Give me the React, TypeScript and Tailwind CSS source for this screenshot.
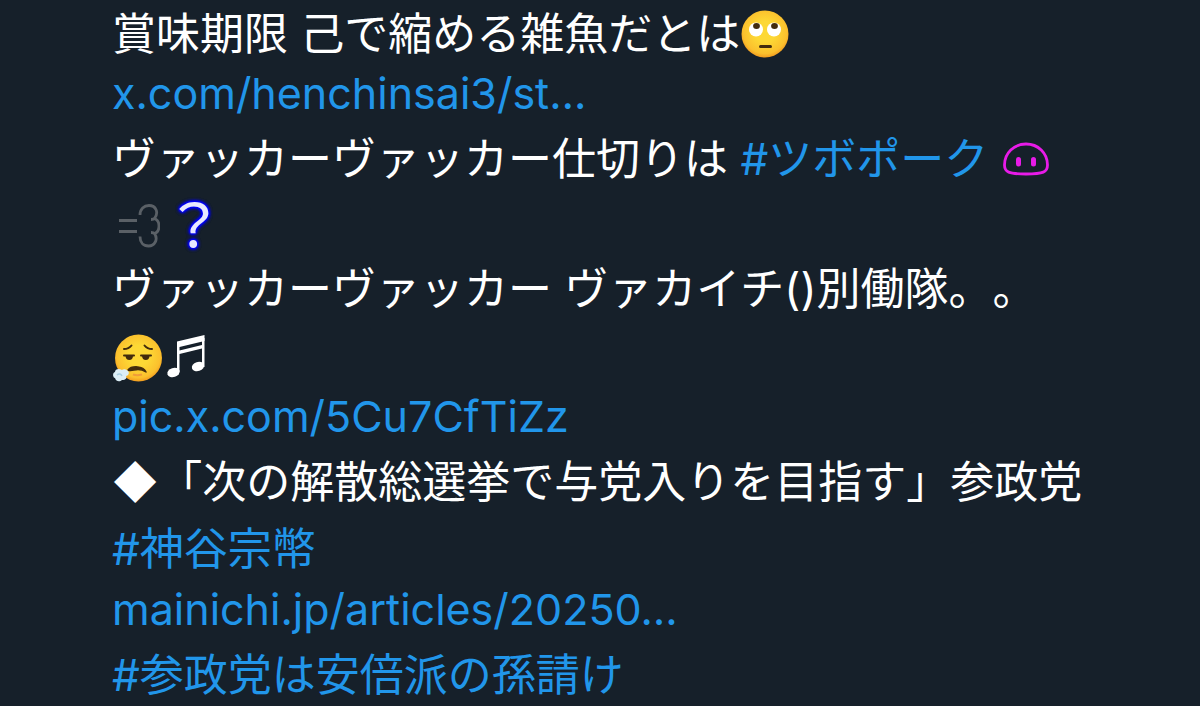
import type { ReactNode } from 'react'

const jp = 'block h-[65px] leading-[65px]'
const latin = 'block h-[60px] text-[43px] leading-[52px]'
const tall = 'block h-[68px] leading-[68px]'

function Link({ children }: { children: ReactNode }) {
  return (
    <a href="#" className="text-[#2196ea]">
      {children}
    </a>
  )
}

function FaceGradient({ id }: { id: string }) {
  return (
    <defs>
      <radialGradient id={id} cx="0.5" cy="0.45" r="0.55">
        <stop offset="0.4" stopColor="#fdd835" />
        <stop offset="0.85" stopColor="#fbc02d" />
        <stop offset="1" stopColor="#f29c1f" />
      </radialGradient>
    </defs>
  )
}

function RollingEyes() {
  return (
    <svg role="img" aria-label="🙄" viewBox="0 0 50 50" className="mb-2 inline-block size-[50px] align-middle">
      <FaceGradient id="roll" />
      <circle cx="25" cy="25" r="23.5" fill="url(#roll)" />
      <circle cx="16" cy="20.5" r="7" fill="#fff" />
      <circle cx="34" cy="20.5" r="7" fill="#fff" />
      <ellipse cx="16.5" cy="17" rx="3.4" ry="2.9" fill="#422b0d" />
      <ellipse cx="34.5" cy="17" rx="3.4" ry="2.9" fill="#422b0d" />
      <path d="M20.5 37.5h10" stroke="#422b0d" strokeWidth="3" strokeLinecap="round" />
    </svg>
  )
}

function Exhaling() {
  return (
    <svg role="img" aria-label="😮‍💨" viewBox="0 0 50 50" className="mb-1 inline-block size-[50px] align-middle">
      <FaceGradient id="exhale" />
      <circle cx="26.5" cy="25" r="23.5" fill="url(#exhale)" />
      <g fill="none" stroke="#422b0d" strokeWidth="2" strokeLinecap="round">
        <path d="M12 16c3 0 5.500-1 7.500-3.500" />
        <path d="M40 16c-3 0-5.500-1-7.500-3.500" />
        <path d="M12 22.500h10" />
        <path d="M29 22.500h10" />
      </g>
      <path d="M13.500 22.500h7.500c0 3-1.500 4.500-3.700 4.500s-3.800-1.500-3.800-4.500z" fill="#422b0d" />
      <path d="M30 22.500h7.500c0 3-1.500 4.500-3.700 4.500s-3.800-1.500-3.800-4.500z" fill="#422b0d" />
      <path
        d="M16 37c3-4 15-5 18 2-3-2-5-2.500-8-2.500-4 0-7 2-10 .5z"
        fill="#422b0d"
        stroke="#422b0d"
        strokeWidth="1.5"
        strokeLinejoin="round"
      />
      <path d="M21 41.500q4 1.500 9 0" stroke="#f09c3a" strokeWidth="2" fill="none" />
      <path
        d="M16 38c-2-2-5-2-6-1-3-2-7-1-7 2-3 1-2 6 0 6 1 4 5 4 7 2 4 0 5-2 4-4 2 0 4-3 2-5z"
        fill="#dceef6"
      />
      <path d="M5 42c2-2 4-1 5 1" stroke="#a9cfe2" strokeWidth="1.5" fill="none" />
    </svg>
  )
}

function Pig() {
  return (
    <svg
      role="img"
      aria-label="🐽"
      viewBox="0 0 46 34"
      className="mb-2 ml-0.5 inline-block h-[34px] w-[46px] align-middle"
      fill="none"
      stroke="#e81be8"
      strokeWidth="2.8"
      strokeLinecap="round"
    >
      <path d="M23 2C11 2 1.500 11 1.500 23c0 7 4 9 21.500 9s21.500-2 21.500-9C44.500 11 35 2 23 2z" />
      <path d="M15.500 17.500v4.500M30.500 17.500v4.500" strokeWidth="5" />
    </svg>
  )
}

function Dash() {
  return (
    <svg
      role="img"
      aria-label="💨"
      viewBox="0 0 44 46"
      className="mb-2 ml-1 inline-block h-[46px] w-[44px] align-middle"
      fill="none"
      stroke="#5a6066"
      strokeWidth="2.8"
    >
      <path d="M3 17.500h18M3 28.500h18" />
      <path d="M24 12c0-6 4-9.500 9-9.500 7 0 10 7 5.500 13 3.500 1.500 4.500 4.500 4.500 7.500s-1.500 6.500-4.500 7.500c4 6 0 12.500-6 12.500-5 0-8.500-3.500-8.500-9.500M39 15c-1 1-2.500 1.500-4 1.500M39 31c-1-1-2.500-1.500-4-1.500" />
    </svg>
  )
}

function Notes() {
  return (
    <svg role="img" aria-label="♬" viewBox="0 0 40 46" className="mb-2 ml-1 inline-block h-[46px] w-[40px] align-middle" fill="#fff">
      <path d="M11 8.500 38.500 2v6L13.500 14v3.500L36 12v3.500L13.500 21v18H11z" />
      <path d="M36 5h2.500v29H36z" />
      <ellipse cx="7.500" cy="39.500" rx="6.300" ry="4.600" transform="rotate(-18 7.500 39.500)" />
      <ellipse cx="32" cy="33.500" rx="6.300" ry="4.600" transform="rotate(-18 32 33.500)" />
    </svg>
  )
}

export default function App() {
  return (
    <main className="min-h-screen overflow-hidden bg-[#16202a] pt-0.5 pr-16 pl-28">
      <p
        lang="ja"
        className="text-[44px] whitespace-nowrap text-white [font-family:Inter,'Noto_Sans_CJK_JP',sans-serif] [text-spacing-trim:space-all]"
      >
        <span className={jp}>
          賞味期限 己で縮める雑魚だとは
          <RollingEyes />
        </span>
        <span className={latin}>
          <Link>x.com/henchinsai3/st…</Link>
        </span>
        <span className={jp}>
          ヴァッカーヴァッカー仕切りは <Link>#ツボポーク</Link> <Pig />
        </span>
        <span className={jp}>
          <Dash />
          <span className="mb-4 ml-1 inline-block align-middle text-[60px] leading-none text-[#e8e8ff] [font-family:'Noto_Sans_CJK_JP',sans-serif] [text-shadow:0_0_2px_#00f,0_0_2px_#00f,0_0_3px_#00f,0_0_3px_#00f,0_0_4px_#00f,0_0_4px_#00f,0_0_4px_#00f]">
            {'\uff1f'}
          </span>
        </span>
        <span className={jp}>ヴァッカーヴァッカー ヴァカイチ()別働隊。。</span>
        <span className={tall}>
          <Exhaling />
          <Notes />
        </span>
        <span className={latin}>
          <Link>pic.x.com/5Cu7CfTiZz</Link>
        </span>
        <span className={jp}>◆「次の解散総選挙で与党入りを目指す」参政党</span>
        <span className={tall}>
          <Link>#神谷宗幣</Link>
        </span>
        <span className={latin}>
          <Link>mainichi.jp/articles/20250…</Link>
        </span>
        <span className={jp}>
          <Link>#参政党は安倍派の孫請け</Link>
        </span>
      </p>
    </main>
  )
}
